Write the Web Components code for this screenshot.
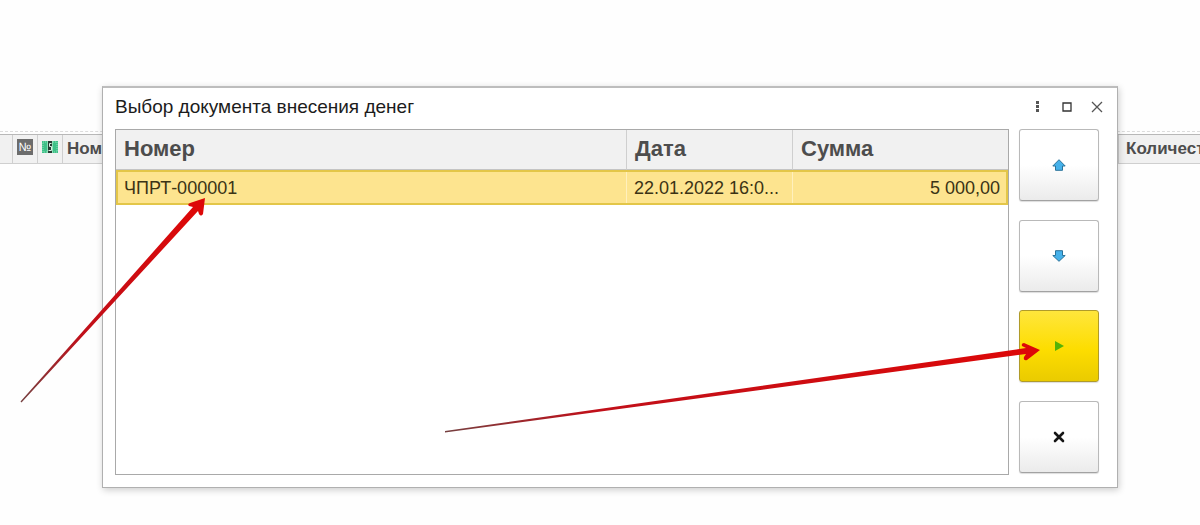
<!DOCTYPE html>
<html lang="ru">
<head>
<meta charset="utf-8">
<title>Выбор документа внесения денег</title>
<style>
  html, body { margin: 0; height: 100%; }
  body { background: #fefefe; font-family: "Liberation Sans", Arial, sans-serif; overflow: hidden; }
</style>
</head>
<body>
<cash-page></cash-page>

<script>
const define = (name, html, setup) => {
  const template = document.createElement('template');
  template.innerHTML = html;
  customElements.define(name, class extends HTMLElement {
    constructor() {
      super();
      this.attachShadow({ mode: 'open' }).append(template.content.cloneNode(true));
    }
    connectedCallback() { if (setup) setup(this, this.shadowRoot); }
  });
};

/* Header strip of the document list behind the dialog */
define('list-header', `
<style>
  :host { display: block; border-top: 1px dashed #dcdcdc; padding-top: 2px; overflow: hidden; }
  .bar { display: flex; height: 28px; background: #f1f1f1; border-top: 1px solid #b8b8b8; border-bottom: 1px solid #cfcfcf;
    font-size: 17px; font-weight: bold; line-height: 28px; color: #4d4d4d; }
  .cell { box-sizing: border-box; border-right: 1px solid #cfcfcf; flex: none; display: flex; align-items: center; justify-content: center; }
  .mark { width: 13px; } .icon { width: 25px; }
  .name { flex: 1; justify-content: flex-start; padding-left: 4px; min-width: 0; overflow: hidden; }
  .count { width: 81px; border: 0; justify-content: flex-start; padding-left: 7px; overflow: hidden; }
  .num { width: 16px; height: 16px; margin-bottom: 4px; background: #6c6c6c; color: #fff; font-size: 12px; font-weight: normal; line-height: 16px; text-align: center; }
  svg { display: block; margin-bottom: 4px; }
</style>
<div class="bar">
  <div class="cell mark"></div>
  <div class="cell icon"><span class="num">№</span></div>
  <div class="cell icon"><svg width="16" height="12" viewBox="0 0 16 12" aria-hidden="true">
    <rect width="16" height="12" fill="#3fc088"/><rect x="1" y="1" width="14" height="10" fill="none" stroke="#8be0b7" stroke-dasharray="1 1"/>
    <rect x="5" width="6" height="12" fill="#8be0b7"/><rect x="6" width="4" height="12" fill="#263b32"/><path d="M9.500 2.500H7.500v3h2v4h-3" fill="none" stroke="#d9efe4"/></svg></div>
  <div class="cell name">Номер</div>
  <div class="cell count">Количест</div>
</div>`);

define('window-controls', `
<style>
  :host { display: flex; gap: 10px; }
  button { width: 20px; height: 20px; padding: 0; border: 0; background: none; display: grid; place-items: center; }
</style>
<button aria-label="Меню"><svg width="3" height="11" fill="#555"><rect width="3" height="3"/><rect y="4" width="3" height="3"/><rect y="8" width="3" height="3"/></svg></button>
<button aria-label="Развернуть"><svg width="10" height="10"><path d="M1 1h8v8H1z" fill="none" stroke="#333" stroke-width="1.3"/></svg></button>
<button aria-label="Закрыть"><svg width="12" height="12"><path d="M1 1l10 10M11 1L1 11" stroke="#555" stroke-width="1.3"/></svg></button>`);

define('document-table', `
<style>
  :host { display: block; border: 1px solid #a9a9a9; background: #fff; min-width: 0; }
  table { width: 100%; table-layout: fixed; border-collapse: separate; border-spacing: 0; }
  .date { width: 166px; } .sum { width: 216px; }
  th { box-sizing: border-box; height: 40px; padding: 0 8px 2px; background: #f1f1f1; border-bottom: 1px solid #c4c4c4; border-left: 1px solid #cfcfcf;
    color: #4d4d4d; font-size: 22px; line-height: 24px; text-align: left; }
  td { box-sizing: border-box; height: 35px; padding: 0 8px; background: #fde48f; border: solid #e3c648; border-width: 2px 0;
    box-shadow: inset 1px 0 #fff0bd; color: #3b3315; font-size: 18px; line-height: 20px; white-space: nowrap; }
  th:first-child { border-left: 0; }
  td:first-child { border-left-width: 2px; padding-left: 6px; box-shadow: none; }
  td:last-child { border-right-width: 2px; padding-right: 6px; text-align: right; }
</style>
<table>
  <colgroup><col><col class="date"><col class="sum"></colgroup>
  <thead><tr><th scope="col">Номер</th><th scope="col">Дата</th><th scope="col">Сумма</th></tr></thead>
  <tbody><tr><td>ЧПРТ-000001</td><td>22.01.2022 16:0...</td><td>5 000,00</td></tr></tbody>
</table>`);

define('tool-button', `
<style>
  :host { display: block; }
  button { display: grid; place-items: center; box-sizing: border-box; width: 80px; height: 72px; padding: 0; border: 1px solid #b9b9b9; border-bottom-color: #a2a2a2;
    border-radius: 3px; background: linear-gradient(#fff 50%, #ebebeb); box-shadow: 0 1px 1px #ddd; }
  :host([primary]) button { background: linear-gradient(#ffe63c, #fddd00 55%, #eacb00); border-color: #b09b2a; }
</style>
<button><slot></slot></button>`, (host, root) => {
  root.querySelector('button').setAttribute('aria-label', host.getAttribute('label'));
});

define('choice-dialog', `
<style>
  :host { display: flex; flex-direction: column; box-sizing: border-box; padding: 0 18px 12px 12px; background: #fff; border: 1px solid #b0b0b0; border-top: 2px solid #bdbdbd;
    box-shadow: 1px 2px 7px rgba(0,0,0,.2); }
  header { display: flex; align-items: center; justify-content: space-between; box-sizing: border-box; height: 41px; padding-bottom: 4px; }
  h1 { margin: 0; font-size: 19px; line-height: 20px; font-weight: normal; color: #1c1c1c; }
  window-controls { margin-right: -8px; }
  .body { display: flex; flex: 1; gap: 10px; min-height: 0; }
  document-table { flex: 1; }
  nav { display: flex; flex-direction: column; justify-content: space-between; padding-bottom: 2px; }
  svg { display: block; }
</style>
<header><h1>Выбор документа внесения денег</h1><window-controls></window-controls></header>
<div class="body">
  <document-table></document-table>
  <nav>
    <tool-button label="Вверх"><svg width="14" height="12"><path d="M7 .7L13.2 7H10.5v4.3h-7V7H.8z" fill="#45b1ea" stroke="#2a7299"/></svg></tool-button>
    <tool-button label="Вниз"><svg width="14" height="12"><path d="M7 11.3L13.2 5.5H10.5V.7h-7v4.8H.8z" fill="#45b1ea" stroke="#2a7299"/></svg></tool-button>
    <tool-button label="Выбрать" primary><svg width="9" height="10"><path d="M0 0l9 5-9 5z" fill="#55b307"/></svg></tool-button>
    <tool-button label="Отмена"><svg width="12" height="12"><path d="M2 2l8 8M10 2l-8 8" stroke="#161616" stroke-width="2.6" stroke-linecap="round"/></svg></tool-button>
  </nav>
</div>`);

/* Tapering red pointers drawn over the page */
define('pointer-arrows', `
<style>:host { display: block; pointer-events: none; } svg { display: block; width: 100%; height: auto; }</style>
<svg viewBox="0 0 1200 525" aria-hidden="true">
  <defs>
    <linearGradient id="a" gradientUnits="userSpaceOnUse" x1="21" y1="402" x2="190" y2="210"><stop stop-color="#754040"/><stop offset=".35" stop-color="#c0101a"/><stop offset="1" stop-color="#dd0808"/></linearGradient>
    <linearGradient id="b" gradientUnits="userSpaceOnUse" x1="445" y1="432" x2="1030" y2="350"><stop stop-color="#754040"/><stop offset=".25" stop-color="#c0101a"/><stop offset="1" stop-color="#dd0808"/></linearGradient>
  </defs>
  <path d="M20.500 401.500L193 207L189 206Q187 204 190 203L205 198L203 214Q201 217 199 214L198 211L21.500 402.500Z" fill="url(#a)"/>
  <path d="M445 431L1026 348L1022 346Q1021 343 1024 343L1040 350L1027 360Q1023 361 1024 357L1026 354L445 432.500Z" fill="url(#b)"/>
</svg>`);

define('cash-page', `
<style>
  :host { display: block; position: relative; box-sizing: border-box; min-height: 100vh; padding-top: 131px; overflow: hidden; }
  choice-dialog { position: absolute; inset: 86px 82px 37px 102px; }
  pointer-arrows { position: absolute; inset: 0 0 auto 0; }
</style>
<list-header></list-header>
<choice-dialog></choice-dialog>
<pointer-arrows></pointer-arrows>`);
</script>
</body>
</html>
